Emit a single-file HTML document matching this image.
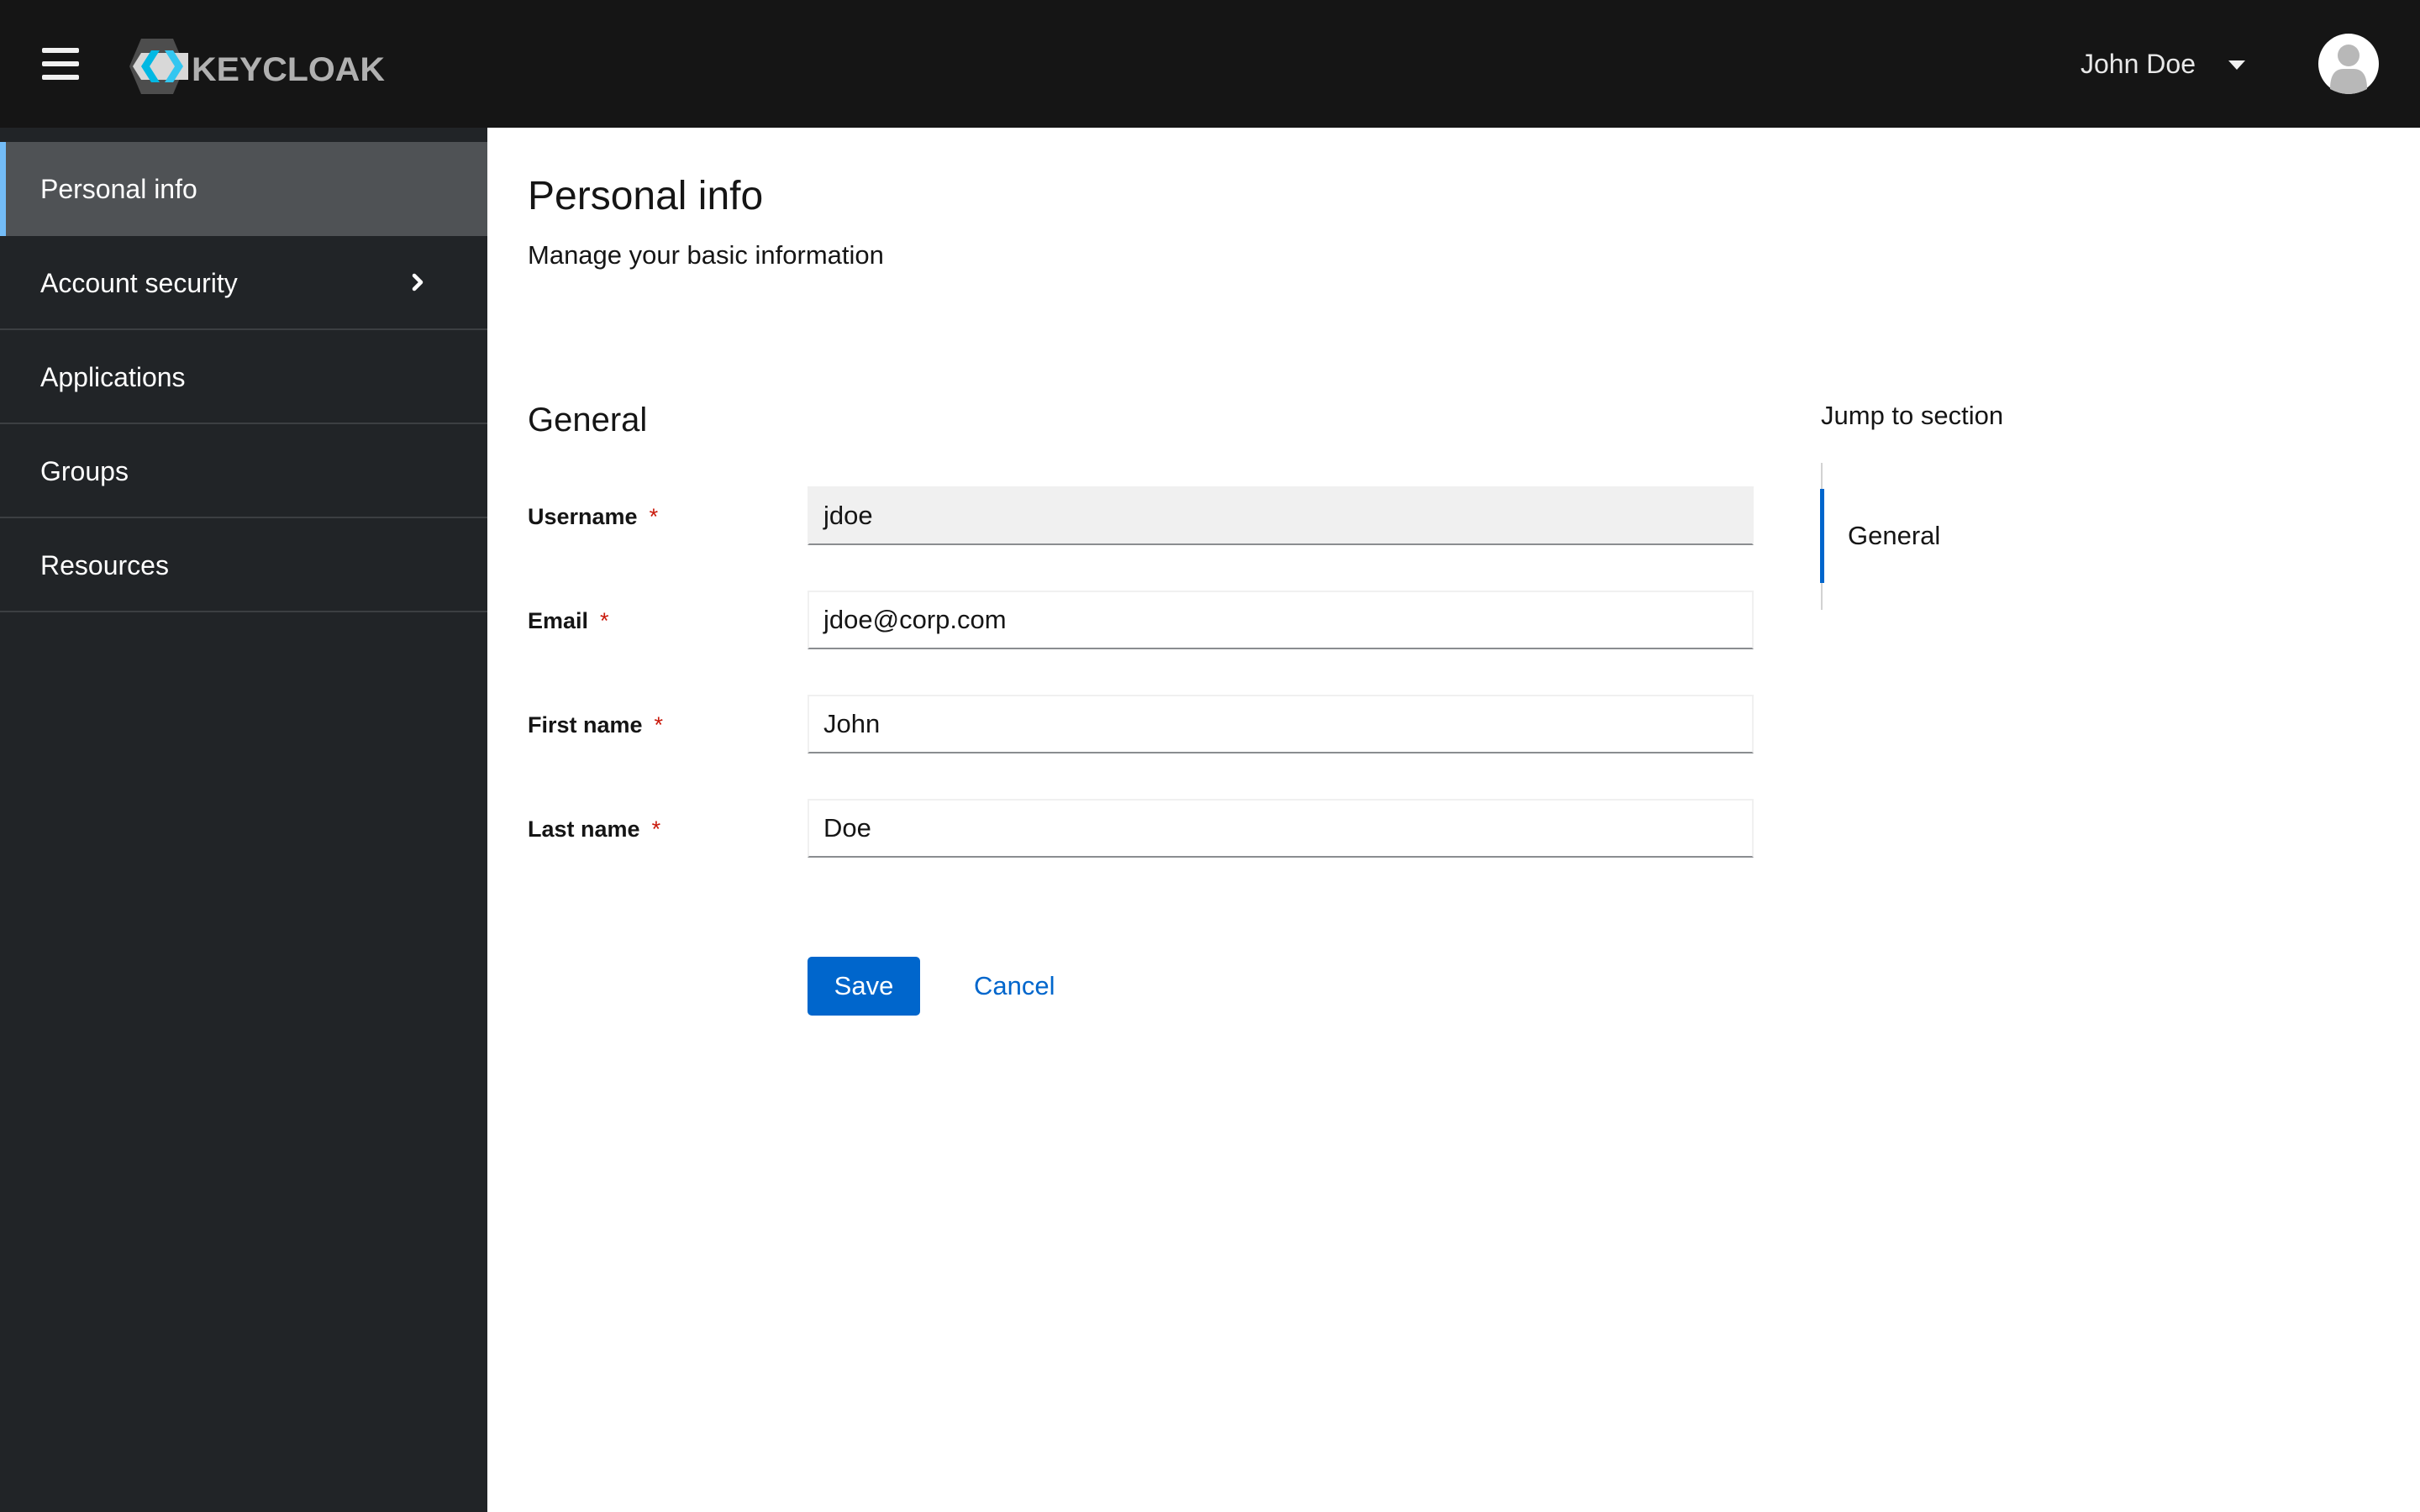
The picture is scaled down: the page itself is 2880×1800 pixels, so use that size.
<!DOCTYPE html>
<html><head><meta charset="utf-8">
<style>
*{box-sizing:border-box;margin:0;padding:0}
body{width:2880px;height:1800px;overflow:hidden;background:#fff;font-family:"Liberation Sans",sans-serif;position:relative}
.hdr{position:absolute;left:0;top:0;width:2880px;height:152px;background:#151515}
.side{position:absolute;left:0;top:152px;width:580px;height:1648px;background:#212427}
.item{position:absolute;left:0;width:580px;height:112px;color:#fff;font-size:32px;padding-left:48px;line-height:112px;border-bottom:2px solid #3c3f42}
.abs{position:absolute}
.lbl{position:absolute;left:628px;font-size:27px;font-weight:bold;color:#151515}
.lbl span{color:#c9190b;font-weight:normal;margin-left:14px}
.inp{position:absolute;left:961px;width:1126px;height:70px;border:2px solid #f0f0f0;border-bottom:2px solid #8a8d90;font-size:31px;color:#151515;padding-left:17px;line-height:66px}
</style></head><body>
<div class="hdr">
 <svg class="abs" style="left:50px;top:57px" width="44" height="38" viewBox="0 0 44 38"><rect x="0" y="0" width="44" height="6" rx="2" fill="#f0f0f0"/><rect x="0" y="16" width="44" height="6" rx="2" fill="#f0f0f0"/><rect x="0" y="32" width="44" height="6" rx="2" fill="#f0f0f0"/></svg>
 <svg class="abs" style="left:154px;top:46px" width="320" height="66" viewBox="0 0 320 66">
  <polygon points="14,0 52,0 66,33 52,66 14,66 0,33" fill="#4d4d4d"/>
  <polygon points="4,33 14,17 70,17 70,49 14,49" fill="#d8d8d8"/>
  <polygon points="26,14 36,14 24,33 36,52 26,52 14,33" fill="#00b8e3"/>
  <polygon points="42,14 52,14 64,33 52,52 42,52 54,33" fill="#33c6f0"/>
  <text x="74" y="50" font-family="Liberation Sans" font-weight="bold" font-size="40" fill="#b0b0b0" textLength="230" lengthAdjust="spacingAndGlyphs">KEYCLOAK</text>
 </svg>
 <div class="abs" style="left:2476px;top:58px;font-size:32px;color:#e8e8e8">John Doe</div>
 <svg class="abs" style="left:2652px;top:72px" width="20" height="12" viewBox="0 0 20 12"><polygon points="0,0 20,0 10,11" fill="#f0f0f0"/></svg>
 <svg class="abs" style="left:2759px;top:40px" width="72" height="72" viewBox="0 0 72 72"><circle cx="36" cy="36" r="36" fill="#fff"/><circle cx="36" cy="26" r="13" fill="#b8b8b8"/><path d="M14 66 Q14 42 30 42 L42 42 Q58 42 58 66 Q36 78 14 66Z" fill="#b8b8b8"/></svg>
</div>
<div class="side">
 <div class="item" style="top:17px;background:#4f5255;border-bottom:none;border-left:7px solid #73bcf7;padding-left:41px">Personal info</div>
 <div class="item" style="top:129px">Account security
  <svg class="abs" style="left:490px;top:44px" width="14" height="22" viewBox="0 0 14 22"><path d="M3 3 L11 11 L3 19" stroke="#fff" stroke-width="4.5" fill="none" stroke-linecap="round" stroke-linejoin="round"/></svg></div>
 <div class="item" style="top:241px">Applications</div>
 <div class="item" style="top:353px">Groups</div>
 <div class="item" style="top:465px">Resources</div>
</div>
<div class="abs" style="left:628px;top:206px;font-size:48px;color:#151515">Personal info</div>
<div class="abs" style="left:628px;top:286px;font-size:31px;color:#151515">Manage your basic information</div>
<div class="abs" style="left:628px;top:478px;font-size:40px;color:#151515">General</div>
<div class="lbl" style="top:600px">Username<span>*</span></div>
<div class="inp" style="top:579px;background:#f0f0f0">jdoe</div>
<div class="lbl" style="top:724px">Email<span>*</span></div>
<div class="inp" style="top:703px">jdoe@corp.com</div>
<div class="lbl" style="top:848px">First name<span>*</span></div>
<div class="inp" style="top:827px">John</div>
<div class="lbl" style="top:972px">Last name<span>*</span></div>
<div class="inp" style="top:951px">Doe</div>
<div class="abs" style="left:961px;top:1139px;width:134px;height:70px;background:#0066cc;border-radius:5px;color:#fff;font-size:31px;text-align:center;line-height:70px">Save</div>
<div class="abs" style="left:1159px;top:1139px;height:70px;line-height:70px;color:#0066cc;font-size:31px">Cancel</div>
<div class="abs" style="left:2167px;top:477px;font-size:31px;color:#151515">Jump to section</div>
<div class="abs" style="left:2167px;top:551px;width:2px;height:175px;background:#d2d2d2"></div>
<div class="abs" style="left:2166px;top:582px;width:5px;height:112px;background:#0066cc"></div>
<div class="abs" style="left:2199px;top:620px;font-size:31px;color:#151515">General</div>
</body></html>
